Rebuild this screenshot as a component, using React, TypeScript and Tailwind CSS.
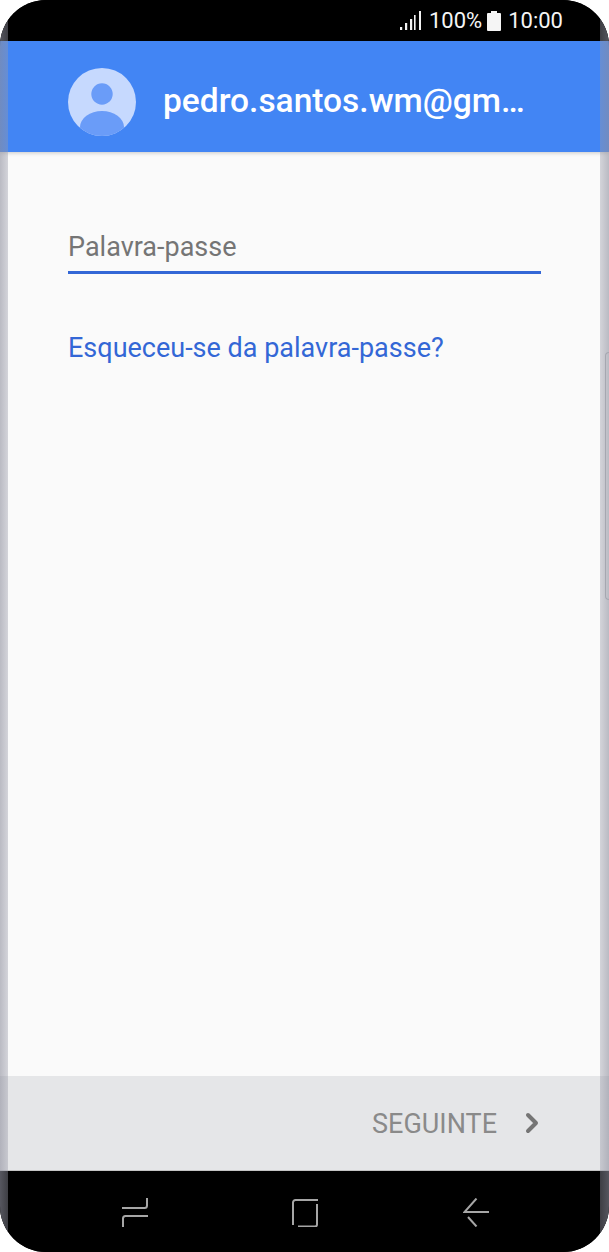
import { ChevronRight } from "lucide-react";

const font = { fontFamily: "Roboto, 'Liberation Sans', sans-serif" };

function SignalIcon() {
  return (
    <svg width="21" height="19" viewBox="0 0 21 19" fill="#f2f2f2">
      <rect x="0" y="16" width="2.2" height="3" />
      <rect x="5" y="12" width="2.2" height="7" />
      <rect x="10" y="8" width="2.2" height="11" />
      <rect x="14" y="4" width="1.6" height="15" />
      <rect x="19" y="0" width="2" height="19" />
    </svg>
  );
}

function BatteryIcon() {
  return (
    <svg width="14" height="20" viewBox="0 0 14 20" fill="#f5f5f5">
      <path d="M4 0h6v2h3a1 1 0 0 1 1 1v16a1 1 0 0 1-1 1H1a1 1 0 0 1-1-1V3a1 1 0 0 1 1-1h3z" />
    </svg>
  );
}

function Avatar() {
  return (
    <svg width="68" height="68" viewBox="0 0 68 68">
      <clipPath id="avatar-clip">
        <circle cx="34" cy="34" r="34" />
      </clipPath>
      <circle cx="34" cy="34" r="34" fill="#c6d9fe" />
      <circle cx="34" cy="26" r="10.7" fill="#6a9cf8" />
      <ellipse cx="34" cy="59" rx="22" ry="16" fill="#6a9cf8" clipPath="url(#avatar-clip)" />
    </svg>
  );
}

function RecentIcon() {
  return (
    <svg width="26" height="29" viewBox="0 0 26 29" fill="none" stroke="#a6a6a6" strokeWidth="2">
      <path d="M25 0v7.5a2.5 2.5 0 0 1-2.5 2.5H0" />
      <path d="M26 18H3.5A2.5 2.5 0 0 0 1 20.5V29" />
    </svg>
  );
}

function HomeIcon() {
  return (
    <svg width="26" height="28" viewBox="0 0 26 28" fill="none" stroke="#a6a6a6" strokeWidth="2">
      <path d="M1 26V3.5A2.5 2.5 0 0 1 3.5 1H26" />
      <path d="M25 5v20.5a2 2 0 0 1-2 2H6" />
    </svg>
  );
}

function BackIcon() {
  return (
    <svg width="26" height="29" viewBox="0 0 26 29" fill="none" stroke="#a6a6a6" strokeWidth="2">
      <path d="M13.5 0.5L1.5 14H26" />
      <path d="M5 19l8.5 9.5" />
    </svg>
  );
}

export default function App() {
  return (
    <div className="w-[609px] h-[1252px] bg-white" style={font}>
      <div className="relative flex flex-col h-full rounded-[46px] overflow-hidden bg-black">
        {/* status bar */}
        <div className="h-[41px] shrink-0 bg-black flex items-center justify-end pr-[46px] text-[#f5f5f5] text-[22px] leading-none">
          <SignalIcon />
          <span className="ml-[8px]">100%</span>
          <span className="ml-[5px] mr-[7px]"><BatteryIcon /></span>
          <span>10:00</span>
        </div>

        {/* account header */}
        <div className="h-[111px] shrink-0 bg-[#4285f4] flex items-center pl-[68px] pt-[10px] z-10 shadow-[0_1px_4px_rgba(0,0,0,0.2)]">
          <Avatar />
          <span className="ml-[27px] text-white text-[33.5px] font-medium whitespace-nowrap">pedro.santos.wm@gm…</span>
        </div>

        {/* form */}
        <div className="flex-1 bg-[#fafafa] px-[68px]">
          <div className="mt-[77px] h-[45px] border-b-[3px] border-[#3367d6] text-[#757575] text-[27px] leading-[36px]">
            Palavra-passe
          </div>
          <div className="mt-[56px] text-[#3367d6] text-[27px] leading-[36px] whitespace-nowrap">
            Esqueceu-se da palavra-passe?
          </div>
        </div>

        {/* action bar */}
        <div className="h-[95px] shrink-0 bg-[#e5e6e8] border-b border-[#c4c4c4] flex items-center justify-end pr-[61px]">
          <span className="mt-[3px] text-[#8a8a8a] text-[27px]">SEGUINTE</span>
          <ChevronRight className="ml-[19px] text-[#757575]" size={32} strokeWidth={3} />
        </div>

        {/* nav keys */}
        <div className="h-[81px] shrink-0 bg-black flex items-center pt-[2px]">
          <div className="ml-[122px]"><RecentIcon /></div>
          <div className="ml-[144px]"><HomeIcon /></div>
          <div className="ml-[145px]"><BackIcon /></div>
        </div>

        {/* curved screen edges */}
        <div className="absolute z-20 left-0 top-0 h-full w-[8px] bg-gradient-to-r from-[#8f909e]/60 to-[#9a9ba9]/40" />
        <div className="absolute z-20 right-0 top-0 h-full w-[9px] bg-gradient-to-l from-[#8f909e]/60 to-[#9a9ba9]/40" />
        <div className="absolute z-20 right-0 top-[352px] h-[248px] w-[4px] rounded-l-[6px] border border-r-0 border-[#a6a7b0]" />
      </div>
    </div>
  );
}
